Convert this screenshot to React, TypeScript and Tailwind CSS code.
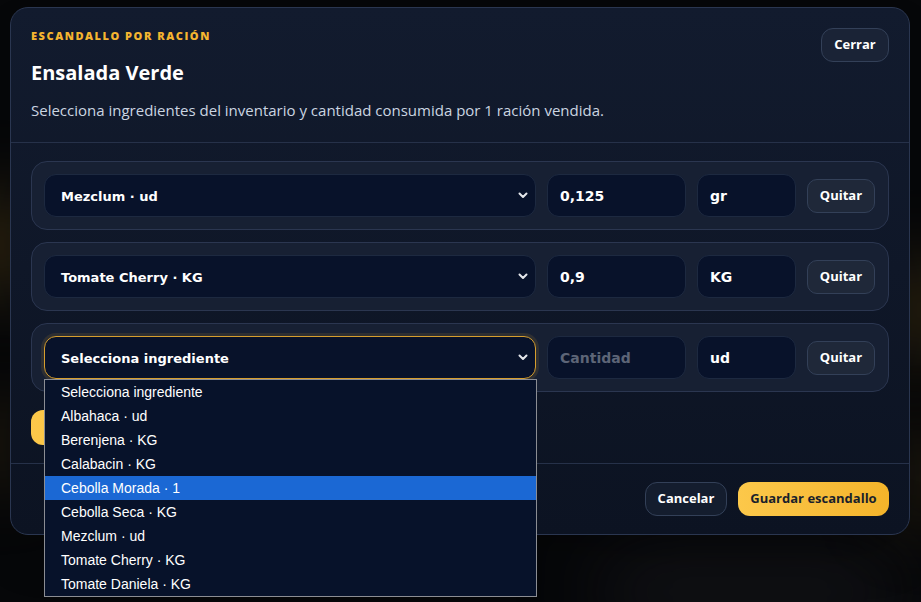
import type { ReactNode } from "react";

type Row = { ingredient: string; qty: string; unit: string; open?: boolean };

const rows: Row[] = [
  { ingredient: "Mezclum · ud", qty: "0,125", unit: "gr" },
  { ingredient: "Tomate Cherry · KG", qty: "0,9", unit: "KG" },
  { ingredient: "Selecciona ingrediente", qty: "", unit: "ud", open: true },
];

const options = [
  "Selecciona ingrediente",
  "Albahaca · ud",
  "Berenjena · KG",
  "Calabacin · KG",
  "Cebolla Morada · 1",
  "Cebolla Seca · KG",
  "Mezclum · ud",
  "Tomate Cherry · KG",
  "Tomate Daniela · KG",
];

function Chevron() {
  return (
    <svg width="10" height="7" viewBox="0 0 10 7" fill="none" aria-hidden="true">
      <path d="M1.5 1.5 5 5l3.5-3.5" stroke="#e5e7eb" strokeWidth="2" strokeLinecap="round" strokeLinejoin="round" />
    </svg>
  );
}

function Field({ children, muted }: { children: ReactNode; muted?: boolean }) {
  return (
    <div
      className={
        "flex h-[43px] items-center rounded-[12px] border border-[#1d2940] bg-[#08122a] px-3 pt-[2px] font-['DejaVu_Sans',sans-serif] text-[14px] font-bold " +
        (muted ? "text-[#5d6577]" : "text-white")
      }
    >
      {children}
    </div>
  );
}

function IngredientRow({ row }: { row: Row }) {
  return (
    <div className="grid grid-cols-[1fr_139px_99px_68px] items-center gap-[11px] rounded-[16px] border border-[#2b3650] bg-[#172033] py-3 pl-3 pr-[13px]">
      <div className="relative">
        <div
          className={
            "flex h-[43px] items-center justify-between rounded-[12px] border bg-[#08122a] pl-4 pr-[7px] font-['DejaVu_Sans',sans-serif] text-[13px] font-bold text-white " +
            (row.open ? "border-[#d69e2e] shadow-[0_0_0_3px_rgba(214,158,46,0.12)]" : "border-[#1d2940]")
          }
        >
          <span className="pt-[2px]">{row.ingredient}</span>
          <Chevron />
        </div>
        {row.open && (
          <ul className="absolute left-0 right-[-1px] top-full z-10 border border-[#8b8d93] bg-[#07122a] font-['Liberation_Sans',Arial,sans-serif] text-[14px] text-white">
            {options.map((o, i) => (
              <li key={o} className={"flex h-6 items-center pl-4 " + (i === 4 ? "bg-[#1b68d4]" : "")}>
                {o}
              </li>
            ))}
          </ul>
        )}
      </div>
      <Field muted={!row.qty}>{row.qty || "Cantidad"}</Field>
      <Field>{row.unit}</Field>
      <button className="h-[34px] rounded-[10px] border border-[#334058] bg-[#1f2839] text-[13px] font-bold text-white">
        Quitar
      </button>
    </div>
  );
}

export default function App() {
  return (
    <div className="relative h-[602px] overflow-hidden bg-[#060709] font-['Open_Sans',sans-serif]">
      <div className="absolute left-[-30px] top-[200px] h-[90px] w-[60px] rounded-full bg-[#b7892a]/40 blur-2xl" />
      <div className="absolute left-[-30px] top-[410px] h-[70px] w-[60px] rounded-full bg-[#b7892a]/25 blur-2xl" />
      <div className="absolute right-[-30px] top-[270px] h-[80px] w-[60px] rounded-full bg-[#b7892a]/40 blur-2xl" />
      <div className="absolute right-[-30px] top-[440px] h-[80px] w-[60px] rounded-full bg-[#b7892a]/25 blur-2xl" />
      <div className="absolute bottom-[-20px] left-[600px] h-[60px] w-[300px] rounded-full bg-[#1c1d22]/70 blur-2xl" />

      <div className="relative pl-[10px] pr-[11px] pt-[7px]">
        <div className="rounded-[18px] border border-[#2a3650] bg-gradient-to-b from-[#121b2e] to-[#0c1322] shadow-2xl">
          <header className="flex items-start justify-between border-b border-[#263149] pb-[21px] pl-[20px] pr-[20px] pt-[20px]">
            <div>
              <p className="text-[11px] font-extrabold uppercase leading-4 tracking-[0.14em] text-[#f5b530]">
                Escandallo por ración
              </p>
              <h1 className="mt-[15px] text-[20px] font-bold leading-7 text-white">Ensalada Verde</h1>
              <p className="mt-[12px] text-[15px] leading-[22px] text-[#cbd5e1]">
                Selecciona ingredientes del inventario y cantidad consumida por 1 ración vendida.
              </p>
            </div>
            <button className="h-[34px] w-[68px] rounded-[12px] border border-[#334058] bg-[#1a2336] text-[13px] font-bold text-white">
              Cerrar
            </button>
          </header>

          <div className="flex flex-col gap-[12px] px-[20px] pb-[18px] pt-[18px]">
            {rows.map((r) => (
              <IngredientRow key={r.unit + r.ingredient} row={r} />
            ))}
            <div className="mt-[6px]">
              <button className="h-[35px] rounded-[12px] bg-gradient-to-r from-[#fcc84a] to-[#f4b42a] px-4 text-[13px] font-bold text-[#1a1f2b]">
                + Añadir ingrediente
              </button>
            </div>
          </div>

          <footer className="flex justify-end gap-[11px] border-t border-[#263149] px-[20px] pb-[18px] pt-[18px]">
            <button className="h-[34px] w-[82px] rounded-[12px] border border-[#334058] bg-[#141d2e] text-[13px] font-bold text-white">
              Cancelar
            </button>
            <button className="h-[34px] w-[151px] rounded-[12px] bg-gradient-to-r from-[#fcc84a] to-[#f4b42a] text-[13px] font-bold text-[#1a1f2b]">
              Guardar escandallo
            </button>
          </footer>
        </div>
      </div>
    </div>
  );
}
